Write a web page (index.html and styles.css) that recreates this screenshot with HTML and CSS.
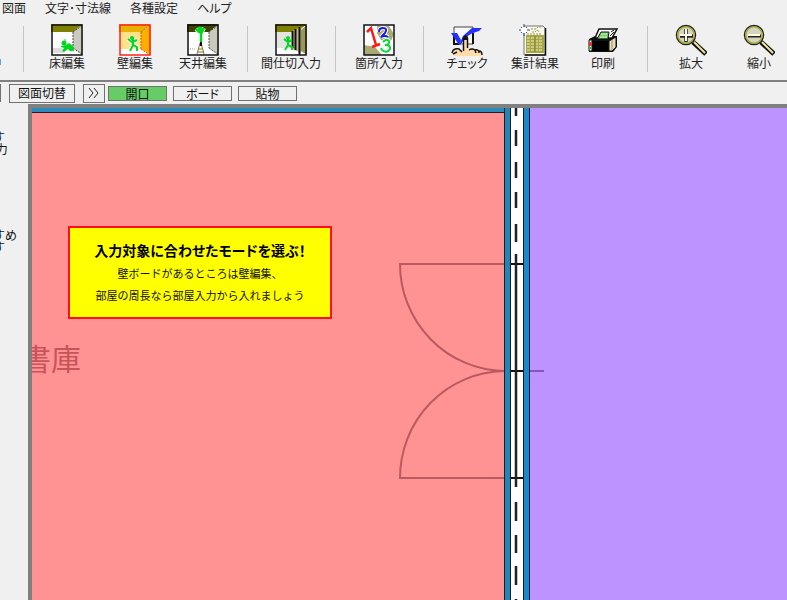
FILE: index.html
```html
<!DOCTYPE html>
<html lang="ja">
<head>
<meta charset="utf-8">
<meta name="viewport" content="width=device-width, initial-scale=1">
<title>壁編集</title>
<link rel="stylesheet" href="styles.css">
</head>
<body>
<div class="app">
  <nav class="menu">
    <button type="button">図面</button>
    <button type="button">文字･寸法線</button>
    <button type="button">各種設定</button>
    <button type="button">ヘルプ</button>
  </nav>

  <div class="toolbar">
    <span class="edge"></span>
    <span class="separator"></span>
    <button type="button" class="tool">
      <svg viewBox="0 0 32 32" aria-hidden="true">
        <rect width="32" height="32" fill="#fff"/>
        <path d="M0 0h32L22 8H0z" fill="#808000"/>
        <path d="M22 8L32 1v30l-10-7z" fill="#c9c9bd"/>
        <path d="M1 24h10l3 5H1z" fill="#ddd"/>
        <path d="M22 8L32 1M22 8v16M22 24l10 7" fill="none" stroke="#444" stroke-dasharray="2 1"/>
        <circle cx="13" cy="19" r="2.5" fill="#00d820"/>
        <circle cx="14" cy="16" r="0.8" fill="#00d820"/>
        <path d="M10 22l5-1 3-2 4 3 1 5h-4l-2-2-4 3-2-1 2-3-3-1z" fill="#00d820"/>
        <rect x="1" y="1" width="30" height="30" fill="none" stroke="#111" stroke-width="1.5"/>
      </svg>
      <span>床編集</span>
    </button>
    <button type="button" class="tool">
      <svg viewBox="0 0 32 32" aria-hidden="true">
        <rect width="32" height="32" fill="#fff"/>
        <path d="M0 0h32L22 8H0z" fill="#e8b000"/>
        <path d="M1 8h21v17H1z" fill="#ffe18a"/>
        <path d="M22 8L32 1v30l-10-6z" fill="#ffae00"/>
        <path d="M22 8L31 1M22 8v17M22 25l9 6" fill="none" stroke="#c96000" stroke-dasharray="2 1"/>
        <path d="M9 15l4 3 5-2M14 14v7l-3 6M14 21l4 2v4" fill="none" stroke="#fff" stroke-width="4"/>
        <path d="M9 15l4 3 5-2M14 14v7l-3 6M14 21l4 2v4" fill="none" stroke="#00d820" stroke-width="2"/>
        <circle cx="13" cy="14" r="2" fill="#00d820"/>
        <rect x="1" y="1" width="30" height="30" fill="none" stroke="#ff2020" stroke-width="1.5"/>
      </svg>
      <span>壁編集</span>
    </button>
    <button type="button" class="tool">
      <svg viewBox="0 0 32 32" aria-hidden="true">
        <rect width="32" height="32" fill="#fff"/>
        <path d="M0 0h32L22 8H0z" fill="#404000"/>
        <path d="M22 8L32 1v30l-10-7z" fill="#c9c9bd"/>
        <path d="M22 8L32 1M22 8v16M22 24l10 7" fill="none" stroke="#555" stroke-dasharray="2 1"/>
        <path d="M1 25h8" stroke="#999" stroke-dasharray="1 1"/>
        <path d="M9 5l3 3h3l2-4M14 7v11" fill="none" stroke="#fff" stroke-width="4"/>
        <path d="M9 5l3 3h3l2-4M14 7v11" fill="none" stroke="#00d820" stroke-width="2.5"/>
        <circle cx="13" cy="5" r="2.5" fill="#00d820"/>
        <path d="M13 19l-3 11M14 19l3 11M11 25h5M11 28h6" fill="none" stroke="#807830"/>
        <path d="M14 18v4" stroke="#111" stroke-width="2"/>
        <rect x="1" y="1" width="30" height="30" fill="none" stroke="#111" stroke-width="1.5"/>
      </svg>
      <span>天井編集</span>
    </button>
    <span class="separator"></span>
    <button type="button" class="tool">
      <svg viewBox="0 0 32 32" aria-hidden="true">
        <rect width="32" height="32" fill="#fff"/>
        <path d="M0 0h32L22 8H0z" fill="#808000"/>
        <path d="M1 8h15v16H1z" fill="#e4e4df"/>
        <path d="M26 6l6-5v30l-6-4z" fill="#98985a"/>
        <path d="M17 7l9-4v26l-9-4z" fill="#bdb990"/>
        <path d="M17.500 7v17M20.500 5v21M24.500 3v28" stroke="#111" stroke-width="2"/>
        <path d="M9 15l4 3 4-2M13 15v6l-3 5M13 21l4 2v3" fill="none" stroke="#00d820" stroke-width="2"/>
        <circle cx="13" cy="14" r="2" fill="#00d820"/>
        <rect x="1" y="1" width="30" height="30" fill="none" stroke="#111" stroke-width="1.5"/>
      </svg>
      <span>間仕切入力</span>
    </button>
    <span class="separator"></span>
    <button type="button" class="tool">
      <svg viewBox="0 0 32 32" aria-hidden="true">
        <rect width="32" height="32" fill="#fff"/>
        <path d="M14 2h12l5 8-3 7-10-1-4-7zM1 21l11 2 7 8H1z" fill="#a9a972"/>
        <path d="M4 8l4-4 5 17M9 23l8-3" fill="none" stroke="#ff1818" stroke-width="2.500"/>
        <path d="M16 8q0-4 4-4 5 0 2 5l-4 4q4-2 7 0" fill="none" stroke="#fff" stroke-width="4"/>
        <path d="M16 8q0-4 4-4 5 0 2 5l-4 4q4-2 7 0" fill="none" stroke="#1818f0" stroke-width="2"/>
        <path d="M20 18q4-4 6-1 1 4-4 4 6 0 5 4-3 5-8 1l-1-2" fill="none" stroke="#fff" stroke-width="4"/>
        <path d="M20 18q4-4 6-1 1 4-4 4 6 0 5 4-3 5-8 1l-1-2" fill="none" stroke="#00e030" stroke-width="2"/>
        <rect x="1" y="1" width="30" height="30" fill="none" stroke="#111" stroke-width="1.5"/>
      </svg>
      <span>箇所入力</span>
    </button>
    <span class="separator"></span>
    <button type="button" class="tool">
      <svg viewBox="0 0 32 32" aria-hidden="true">
        <path d="M3 3h19v17H3z" fill="#f8f8f8" stroke="#444"/>
        <path d="M22 9v11M3 9v11h5" fill="none" stroke="#111" stroke-width="2"/>
        <path d="M0 9h6l4 7-2 5zM8 21l4-9 9-8h10q-2 3-6 4-9 2-15 12z" fill="#2430ff"/>
        <path d="M12 31V15q2-4 5 0v9l3 1h6l4 3v4H4l-3-4 5-3 6 3z" fill="#ffdca8"/>
        <path d="M12.500 27V14q2.500-4 4 0v10" fill="none" stroke="#111" stroke-width="1.500"/>
        <path d="M13 14q2-3 3 0v2h-3z" fill="#111"/>
        <path d="M1 29q1-5 7-4l3 3M2 30l4-2M18 26q3-2 6 0l1 3M24 26q4-1 4 3M28 27q3 0 3 4" fill="none" stroke="#111" stroke-width="1.5"/>
      </svg>
      <span>チェック</span>
    </button>
    <button type="button" class="tool">
      <svg viewBox="0 0 32 32" aria-hidden="true">
        <path d="M5 2h19l2 2v27H5z" fill="#f8f8ee" stroke="#777"/>
        <path d="M26.500 4v27H6" fill="none" stroke="#111" stroke-width="1.5"/>
        <path d="M7 11h18v18H7z" fill="#a7a747"/>
        <path d="M8 14h16M8 17h16M8 20h16M8 23h16M8 26h16" fill="none" stroke="#eeedb8" stroke-dasharray="3 1"/>
        <path d="M16 12v16" stroke="#77772c"/>
        <path d="M12 5h5l2-2h4M13 8h3l2-2 3 2M8 10h15" fill="none" stroke="#999950" stroke-dasharray="2 1"/>
        <circle cx="5" cy="6" r="3" fill="#fff"/>
        <path d="M5 0v3M5 9v3M0 6h2M8 6h3M2 3l1 1M8 3L7 4M2 9l1-1M7 8l1 1" fill="none" stroke="#304878"/>
      </svg>
      <span>集計結果</span>
    </button>
    <button type="button" class="tool">
      <svg viewBox="0 0 32 32" aria-hidden="true">
        <path d="M2 15l6-3h22v11l-4 5H2z" fill="#111"/>
        <path d="M22 17l7-4v10l-4 4h-3z" fill="#e6dfb8" stroke="#111"/>
        <path d="M25 16v10" stroke="#988f68"/>
        <path d="M8 14l4-9h18l-5 9z" fill="#fff" stroke="#111" stroke-width="1.5"/>
        <path d="M10 15l4-7h8l-1 7z" fill="#70c860" stroke="#111"/>
        <path d="M14 10h6M13 13h7" stroke="#d9ffd0"/>
        <path d="M24 8l3-2M23 12l4-4" stroke="#111"/>
        <path d="M2 16h3v11H2z" fill="#fff" stroke="#111"/>
        <path d="M2 18h3v4H2z" fill="#e03838"/>
        <path d="M2 23h3v2H2z" fill="#30b050"/>
        <path d="M6 17h15v10H6z" fill="#000"/>
      </svg>
      <span>印刷</span>
    </button>
    <span class="separator"></span>
    <button type="button" class="tool">
      <svg viewBox="0 0 32 32" aria-hidden="true">
        <path d="M18 18l13 12" stroke="#111" stroke-width="5"/>
        <path d="M19 18l11 11" stroke="#f0e9a0" stroke-width="2"/>
        <circle cx="11" cy="11" r="9.500" fill="#d4d4c4" stroke="#222" stroke-width="1.500"/>
        <circle cx="11" cy="11" r="8.300" fill="none" stroke="#a8a838" stroke-width="1.500"/>
        <path d="M11 5v13M5 12h13" stroke="#222" stroke-width="3.500"/>
        <path d="M11 5v12M5 11h12" stroke="#fffde0" stroke-width="2"/>
      </svg>
      <span>拡大</span>
    </button>
    <button type="button" class="tool">
      <svg viewBox="0 0 32 32" aria-hidden="true">
        <path d="M18 18l13 12" stroke="#111" stroke-width="5"/>
        <path d="M19 18l11 11" stroke="#f0e9a0" stroke-width="2"/>
        <circle cx="11" cy="11" r="9.500" fill="#d4d4c4" stroke="#222" stroke-width="1.500"/>
        <circle cx="11" cy="11" r="8.300" fill="none" stroke="#a8a838" stroke-width="1.500"/>
        <path d="M5 12h13" stroke="#222" stroke-width="3"/>
        <path d="M5 11h12" stroke="#fffde0" stroke-width="2"/>
      </svg>
      <span>縮小</span>
    </button>
  </div>

  <div class="modes">
    <span class="stub"></span>
    <button type="button" class="switch">図面切替</button>
    <button type="button" class="more" aria-label="次へ">
      <svg viewBox="0 0 12 12" aria-hidden="true"><path d="M1 1l4 5-4 5M6 1l4 5-4 5" fill="none" stroke="#222"/></svg>
    </button>
    <div class="tabs">
      <button type="button" class="active">開口</button>
      <button type="button">ボード</button>
      <button type="button">貼物</button>
    </div>
  </div>

  <div class="work">
    <aside class="side">
      <p>す<br>&nbsp;力</p>
      <p>すめ<br>す</p>
    </aside>
    <main class="canvas">
      <svg class="plan" aria-label="平面図">
        <rect width="473" height="100%" fill="#ff9393"/>
        <rect width="473" height="4" fill="#2a8abb"/>
        <rect y="4" width="473" height="1" fill="#301820"/>
        <rect x="498" width="100%" height="100%" fill="#bd93ff"/>
        <rect x="478" width="14" height="100%" fill="#fff"/>
        <g class="wall">
          <rect x="472" width="7" height="100%" fill="#142028"/>
          <rect x="473" width="5" height="100%" fill="#2584b4"/>
          <rect x="491" width="7" height="100%" fill="#142028"/>
          <rect x="492" width="5" height="100%" fill="#1f87c8"/>
        </g>
        <g fill="none" stroke="#b95a60" stroke-width="2">
          <path d="M472 156H368A106 107 0 0 0 472 263"/>
          <path d="M472 370H368A106 107 0 0 1 472 263"/>
        </g>
        <path d="M498 263h14" stroke="#8657b8" stroke-width="2"/>
        <path d="M479 156h12M479 263h12M479 370h12" stroke="#111" stroke-width="2"/>
        <path d="M484 0v8M484 22v16M484 54v16M484 84v16M484 116v18M484 146v233M484 394v19M484 427v18M484 458v19M484 491v18" stroke="#222" stroke-width="2.500"/>
        <text class="room" x="-11" y="262">書庫</text>
      </svg>
      <section class="callout">
        <h1>入力対象に合わせたモードを選ぶ！</h1>
        <p>壁ボードがあるところは壁編集、</p>
        <p>部屋の周長なら部屋入力から入れましょう</p>
      </section>
    </main>
  </div>
</div>
</body>
</html>
```
FILE: styles.css
```css
* {
  box-sizing: border-box;
}

body {
  margin: 0;
  background: #f0f0f0;
  color: #222;
  font: 12px/16px "Noto Sans CJK JP", sans-serif;
  font-feature-settings: "palt";
}

button {
  margin: 0;
  padding: 0;
  border: 0;
  background: none;
  color: inherit;
  font: inherit;
  font-feature-settings: inherit;
  white-space: nowrap;
}

.app {
  display: flex;
  flex-direction: column;
  height: 100vh;
  overflow: hidden;
}

.menu {
  display: flex;
  gap: 19px;
  padding: 0 2px 5px;
  line-height: 15px;
}

.toolbar {
  display: flex;
  height: 62px;
  border-bottom: 2px solid #808080;
}

.edge {
  flex: none;
  width: 13px;
}

.edge::before {
  content: "";
  display: block;
  width: 1px;
  height: 6px;
  margin-top: 39px;
  background: #58a8e8;
}

.separator {
  flex: none;
  width: 20px;
  padding: 6px 0 8px;
}

.separator::before {
  content: "";
  display: block;
  width: 1px;
  height: 46px;
  margin: 0 auto;
  background: #c4c4c4;
}

.tool {
  flex: none;
  display: flex;
  flex-direction: column;
  align-items: center;
  width: 68px;
  padding-top: 4px;
  line-height: 14px;
}

.tool svg {
  width: 32px;
  height: 32px;
}

.modes {
  display: flex;
  align-items: center;
  height: 22px;
}

.modes button {
  border: 1px solid #707070;
  color: #111;
}

.stub {
  width: 1px;
  height: 18px;
  margin-right: 8px;
  background: #707070;
}

.modes .switch {
  width: 66px;
  height: 19px;
  margin-right: 8px;
}

.modes .more {
  display: grid;
  place-items: center;
  width: 22px;
  height: 19px;
  margin-right: 3px;
}

.more svg {
  width: 12px;
  height: 12px;
}

.tabs {
  display: flex;
  gap: 6px;
}

.tabs button {
  width: 59px;
  height: 15px;
  line-height: 13px;
}

.tabs .active {
  background: #66cc66;
}

.work {
  flex: 1;
  display: flex;
  min-height: 0;
}

.side {
  flex: none;
  width: 28px;
  padding-top: 27px;
  overflow: hidden;
  line-height: 12px;
  font-feature-settings: normal;
}

.side p {
  margin: 0 0 74px -7px;
  color: #111;
}

.canvas {
  position: relative;
  flex: 1;
  min-width: 0;
  border-top: 4px solid #808080;
  border-left: 4px solid #808080;
}

.plan {
  display: block;
  width: 100%;
  height: 100%;
}

.room {
  fill: #b83e48;
  font-size: 30px;
  opacity: 0.75;
}

.callout {
  position: absolute;
  top: 118px;
  left: 36px;
  padding: 11px 22px;
  border: 2px solid #ff1010;
  background: #ff0;
  color: #111;
  text-align: center;
  width: 264px;
  white-space: nowrap;
}

.callout h1 {
  margin: 0 0 1px;
  color: #000;
  font-size: 14px;
  line-height: 22px;
}

.callout p {
  margin: 0;
  font-size: 11px;
  line-height: 22px;
  font-feature-settings: normal;
}
```
